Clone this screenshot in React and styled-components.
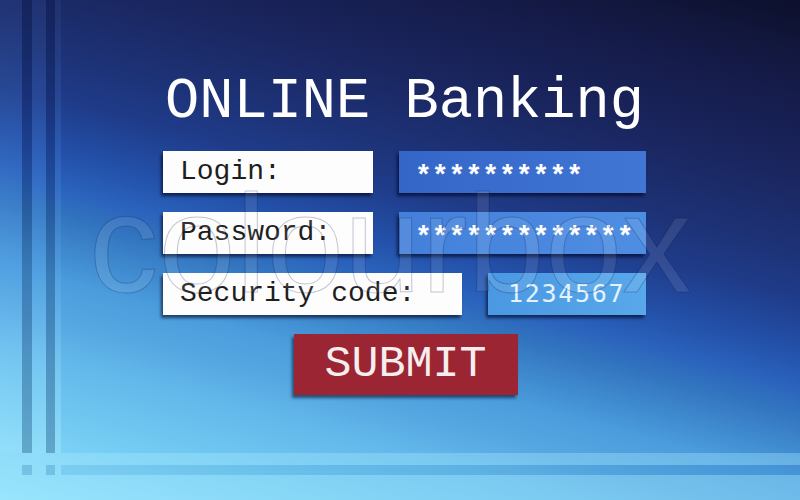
import React from 'react';
import styled, { createGlobalStyle } from 'styled-components';

const GlobalStyle = createGlobalStyle`
  html, body {
    margin: 0;
    padding: 0;
  }
  body {
    width: 800px;
    height: 500px;
    overflow: hidden;
  }
`;

const MONO = '"Courier New", Courier, "Nimbus Mono PS", "Nimbus Mono L", FreeMono, "Liberation Mono", monospace';
const LIGHT = 'rgba(170, 235, 255, 0.35)';
const RAIL_LIGHT = 'linear-gradient(to bottom, rgba(110, 170, 255, 0.06), rgba(120, 190, 255, 0.16) 60%, rgba(170, 235, 255, 0.42))';
const DARK = 'rgba(0, 10, 50, 0.22)';

const Page = styled.div`
  position: relative;
  width: 800px;
  height: 500px;
  overflow: hidden;
  display: grid;
  grid-template-columns: 61px 1fr;
  grid-template-rows: 453px 1fr;
  background: linear-gradient(195deg,
    #0c102c 0%,
    #151b48 12%,
    #1a2660 25%,
    #1d3276 35%,
    #1f3c8a 42%,
    #2350a8 49%,
    #2a62bc 54%,
    #3274bf 58%,
    #4a9cdc 67%,
    #56a8e2 73%,
    #62b8ea 78%,
    #6ec6f0 85%,
    #90e2fc 100%);
`;

const LeftRail = styled.div`
  display: flex;
`;

const Stripe = styled.div`
  width: ${(p) => (p.$w ? `${p.$w}px` : 'auto')};
  flex: ${(p) => (p.$w ? 'none' : 1)};
  background: ${(p) => p.$tone};
`;

const BottomRail = styled.div`
  grid-column: 1 / -1;
  display: flex;
  flex-direction: column;
`;

const Band = styled.div`
  height: ${(p) => (p.$h ? `${p.$h}px` : 'auto')};
  flex: ${(p) => (p.$h ? 'none' : 1)};
  display: flex;
  background: ${(p) => p.$tone || 'transparent'};
`;

const Main = styled.main`
  display: flex;
  flex-direction: column;
  padding: 74px 0 0 102px;
`;

const Form = styled.div`
  width: 483px;
  display: flex;
  flex-direction: column;
  gap: 19px;
`;

const Title = styled.h1`
  margin: 0 0 1px;
  font-family: ${MONO};
  font-weight: 400;
  font-size: 57px;
  line-height: 57px;
  color: #ffffff;
  text-align: center;
  white-space: nowrap;
`;

const Row = styled.div`
  display: flex;
  gap: 26px;
  height: 42px;
`;

const LabelBox = styled.div`
  width: ${(p) => p.$w}px;
  box-sizing: border-box;
  padding-left: 17px;
  background: #fdfdfd;
  box-shadow: -2px 3px 3px rgba(0, 0, 25, 0.6);
  font-family: ${MONO};
  font-size: 28px;
  line-height: 42px;
  color: #1e1e1e;
  white-space: nowrap;
`;

const ValueBox = styled.div`
  flex: 1;
  box-sizing: border-box;
  padding-left: ${(p) => p.$pad}px;
  background: ${(p) => p.$bg};
  box-shadow: -2px 3px 3px rgba(0, 0, 25, 0.6);
  color: #ffffff;
  white-space: nowrap;
  overflow: hidden;
`;

const Stars = styled.span`
  display: block;
  padding-top: 5px;
  font-family: ${MONO};
  font-weight: 700;
  font-size: 28px;
  line-height: 42px;
`;

const Digits = styled.span`
  display: block;
  font-family: "DejaVu Sans Mono", monospace;
  font-size: 25px;
  letter-spacing: 1.7px;
  line-height: 42px;
  color: #e4f3ff;
`;

const Submit = styled.button`
  align-self: center;
  margin-left: 2px;
  width: 224px;
  height: 61px;
  border: none;
  padding: 0;
  background: #9b2532;
  box-shadow: -2px 3px 3px rgba(0, 0, 25, 0.55);
  font-family: ${MONO};
  font-size: 45px;
  color: #f6eeee;
  cursor: pointer;
`;

const Watermark = styled.div`
  position: absolute;
  left: 89px;
  top: 174px;
  font-family: "Liberation Sans", Arial, sans-serif;
  font-size: 139px;
  line-height: 1;
  color: rgba(255, 255, 255, 0.09);
  -webkit-text-stroke: 1px rgba(10, 20, 70, 0.25);
  pointer-events: none;
  user-select: none;
`;

const railStripes = [
  { w: 22, tone: RAIL_LIGHT },
  { w: 10, tone: DARK },
  { w: 14, tone: RAIL_LIGHT },
  { w: 9, tone: DARK },
  { w: 6, tone: RAIL_LIGHT },
];

const crossStripes = [
  { w: 22, tone: LIGHT },
  { w: 10, tone: 'rgba(0, 30, 100, 0.12)' },
  { w: 14, tone: LIGHT },
  { w: 9, tone: 'rgba(0, 30, 100, 0.12)' },
  { w: 6, tone: LIGHT },
  { tone: 'rgba(0, 30, 100, 0.04)' },
];

export default function App() {
  return (
    <>
      <GlobalStyle />
      <Page>
        <LeftRail>
          {railStripes.map((s, i) => (
            <Stripe key={i} $w={s.w} $tone={s.tone} />
          ))}
        </LeftRail>

        <Main>
          <Form>
            <Title>ONLINE Banking</Title>
            <Row>
              <LabelBox $w={210}>Login:</LabelBox>
              <ValueBox $pad={16} $bg="linear-gradient(90deg, #3466c8, #4176d4)">
                <Stars>**********</Stars>
              </ValueBox>
            </Row>
            <Row>
              <LabelBox $w={210}>Password:</LabelBox>
              <ValueBox $pad={16} $bg="linear-gradient(90deg, #4480da, #4e8ee2)">
                <Stars>*************</Stars>
              </ValueBox>
            </Row>
            <Row>
              <LabelBox $w={299}>Security code:</LabelBox>
              <ValueBox $pad={20} $bg="linear-gradient(90deg, #4a98e2, #58a8ea)">
                <Digits>1234567</Digits>
              </ValueBox>
            </Row>
            <Submit>SUBMIT</Submit>
          </Form>
        </Main>

        <BottomRail>
          <Band $h={12} $tone={LIGHT} />
          <Band $h={10}>
            {crossStripes.map((s, i) => (
              <Stripe key={i} $w={s.w} $tone={s.tone} />
            ))}
          </Band>
          <Band $tone={LIGHT} />
        </BottomRail>

        <Watermark>colourbox</Watermark>
      </Page>
    </>
  );
}
